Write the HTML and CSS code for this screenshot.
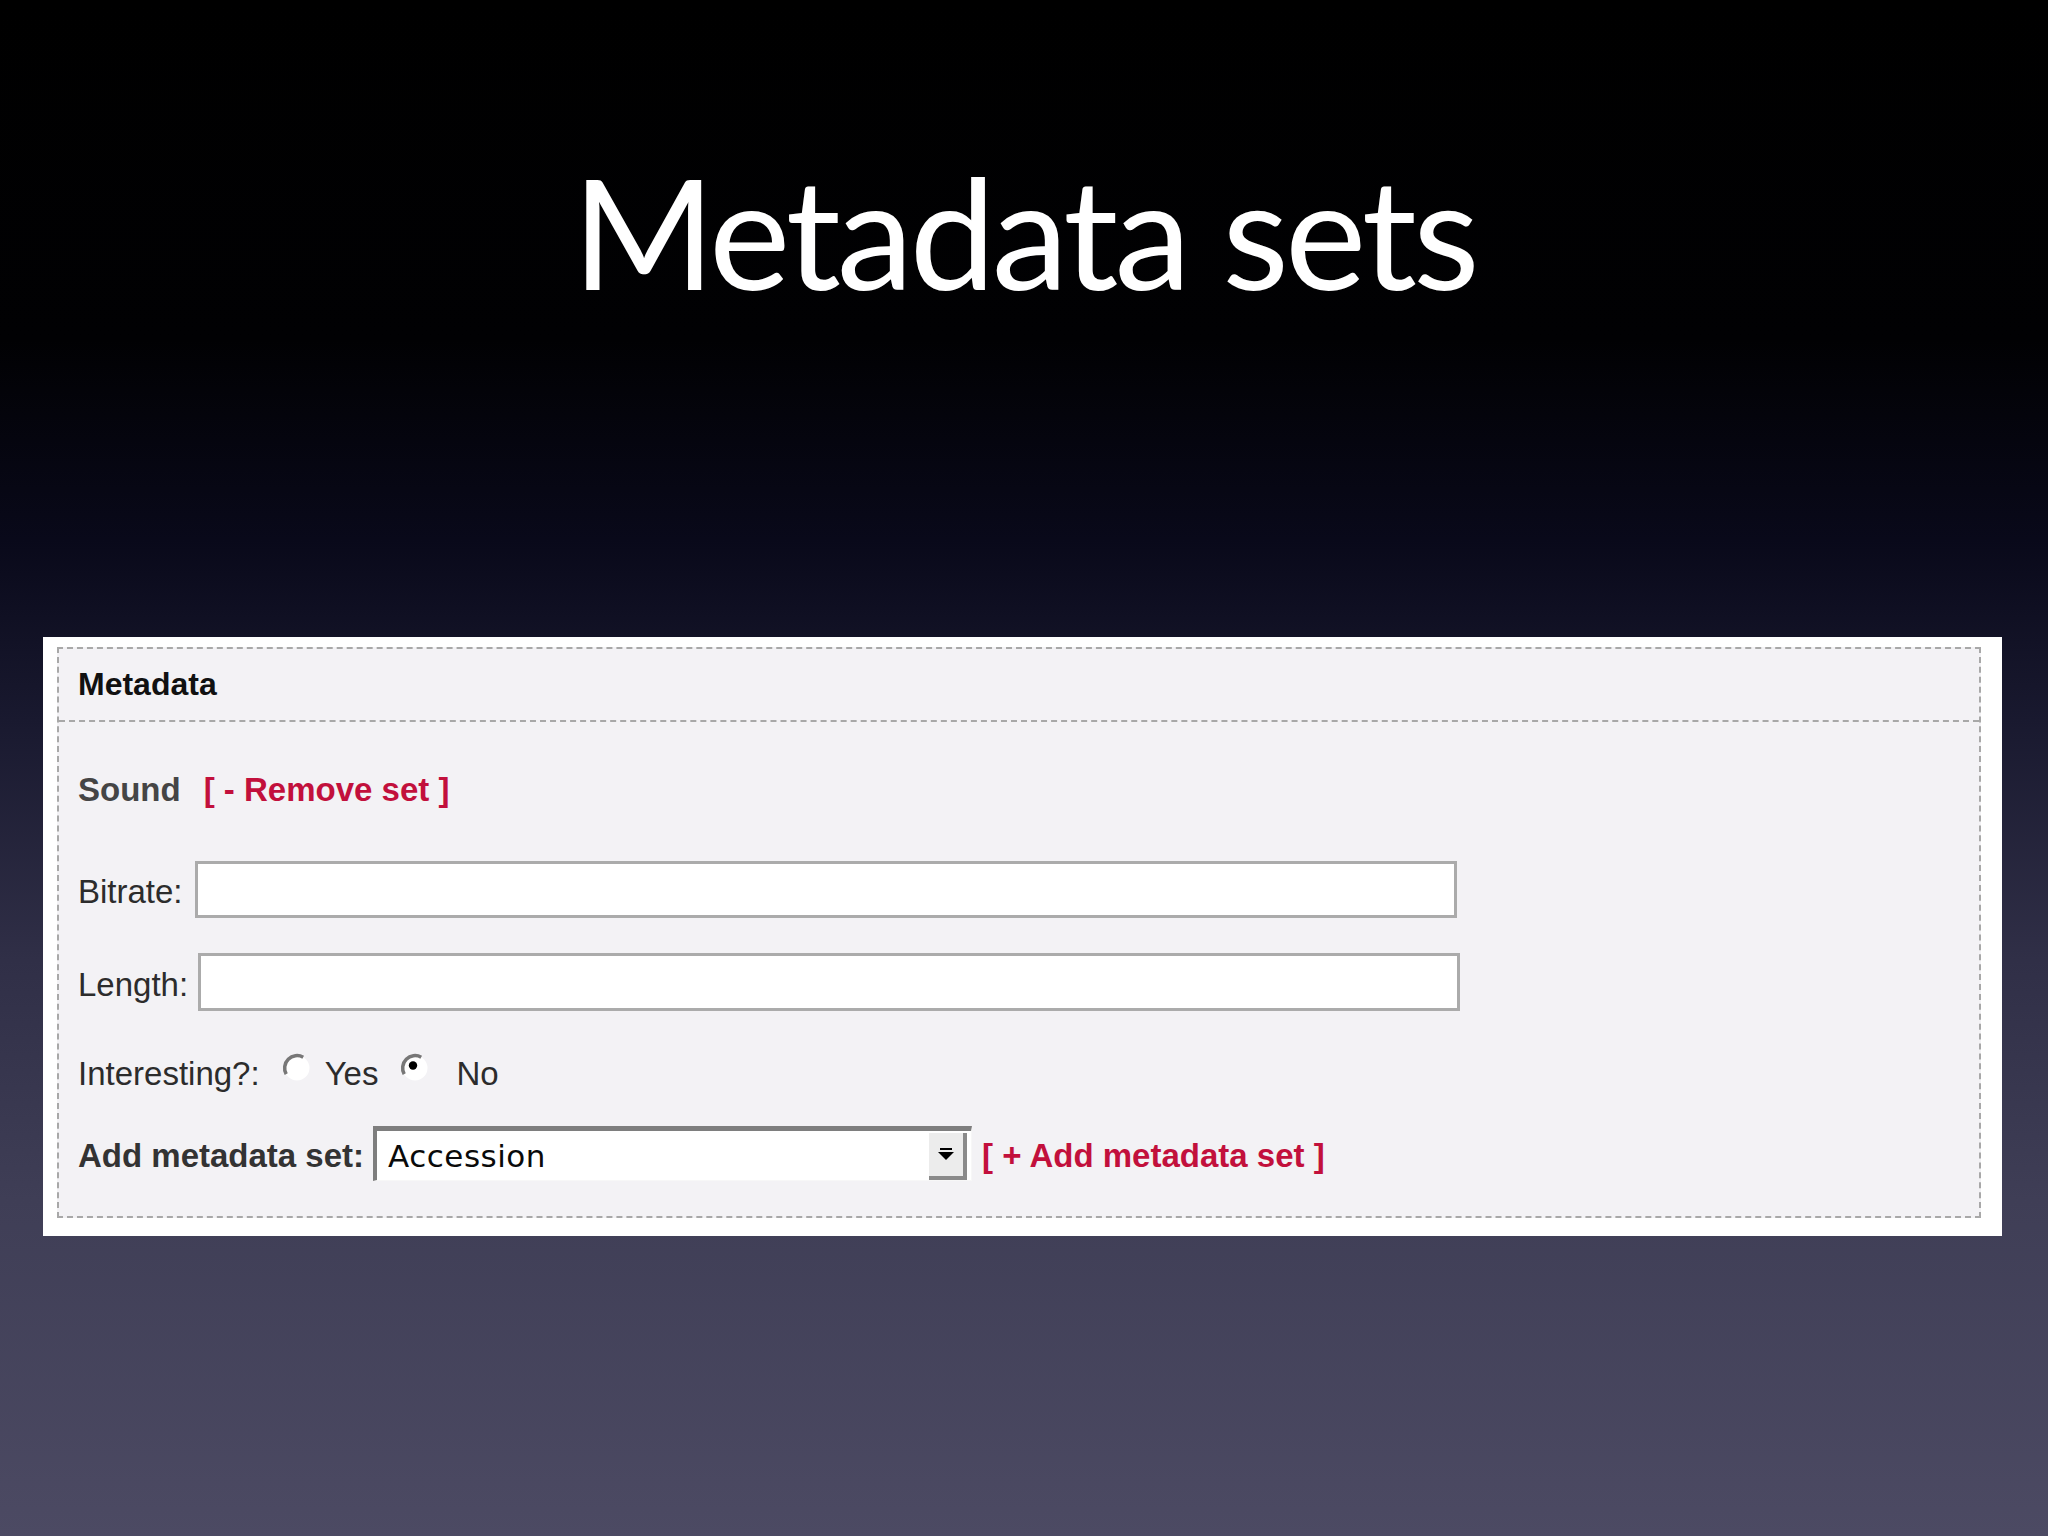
FILE: index.html
```html
<!DOCTYPE html>
<html lang="en">
<head>
<meta charset="utf-8">
<title>Metadata sets</title>
<link rel="stylesheet" href="styles.css">
</head>
<body>
<div class="slide">
  <h1 class="title">Metadata sets</h1>
  <div class="panel">
    <div class="fieldset">
      <div class="legend">Metadata</div>
      <div class="fields">
        <div class="row set-row">
          <span class="set-name">Sound</span>
          <span class="link">[ - Remove set ]</span>
        </div>
        <div class="row input-row bitrate-row">
          <span class="label">Bitrate:</span>
          <span class="text-input"></span>
        </div>
        <div class="row input-row length-row">
          <span class="label">Length:</span>
          <span class="text-input"></span>
        </div>
        <div class="row radio-row">
          <span class="label">Interesting?:</span>
          <span class="radio">
            <svg width="32" height="32" viewBox="0 0 32 32">
              <circle cx="15" cy="16" r="12.5" fill="#ffffff"/>
              <path d="M4.2 22.2 A12.5 12.5 0 0 1 21.2 5.2" fill="none" stroke="#777777" stroke-width="3.5"/>
            </svg>
          </span>
          <span class="radio-label">Yes</span>
          <span class="radio">
            <svg width="32" height="32" viewBox="0 0 32 32">
              <circle cx="15" cy="16" r="12.5" fill="#ffffff"/>
              <path d="M4.2 22.2 A12.5 12.5 0 0 1 21.2 5.2" fill="none" stroke="#777777" stroke-width="3.5"/>
              <circle cx="13" cy="13.5" r="4.2" fill="#000000"/>
            </svg>
          </span>
          <span class="radio-label no">No</span>
        </div>
        <div class="row add-row">
          <span class="label strong">Add metadata set:</span>
          <span class="select">
            <span class="select-value">Accession</span>
            <span class="select-button">
              <svg width="22" height="16" viewBox="0 0 22 16">
                <rect x="5" y="1" width="12" height="2" fill="#000"/>
                <path d="M3 5 H19 L11 13 Z" fill="#000"/>
              </svg>
            </span>
          </span>
          <span class="link">[ + Add metadata set ]</span>
        </div>
      </div>
    </div>
  </div>
</div>
</body>
</html>
```

FILE: styles.css
```css
html, body {
  margin: 0;
  padding: 0;
}

body {
  width: 2048px;
  height: 1536px;
  overflow: hidden;
  background: linear-gradient(180deg,
    #000000 0px,
    #010103 340px,
    #09091a 540px,
    #19192f 720px,
    #302f47 960px,
    #3f3e56 1200px,
    #4c4a63 1536px);
}

.slide {
  display: flex;
  flex-direction: column;
}

.title {
  margin: 0;
  padding-top: 154px;
  height: 154px;
  font-family: Lato, "Open Sans", sans-serif;
  font-weight: 400;
  font-size: 154px;
  line-height: 154px;
  color: #ffffff;
  text-align: center;
  letter-spacing: -4px;
}

.panel {
  margin: 329px 0 0 43px;
  width: 1959px;
  height: 599px;
  box-sizing: border-box;
  background: #ffffff;
  padding: 10px 21px 18px 14px;
  font-family: "Liberation Sans", Arial, sans-serif;
  font-size: 33px;
  color: #2c2c2c;
}

.fieldset {
  height: 100%;
  box-sizing: border-box;
  border: 2px dashed #a8a8a8;
  background: #f3f2f5;
  display: flex;
  flex-direction: column;
}

.legend {
  height: 71px;
  border-bottom: 2px dashed #a8a8a8;
  padding-left: 19px;
  display: flex;
  align-items: center;
  font-weight: 700;
  font-size: 32px;
  color: #111111;
}

.fields {
  padding-left: 19px;
  display: flex;
  flex-direction: column;
}

.row {
  display: flex;
  align-items: center;
}

.set-row {
  margin-top: 48px;
  height: 40px;
  font-weight: 700;
}

.set-name {
  color: #454545;
  margin-right: 23px;
}

.link {
  color: #c2103c;
  font-weight: 700;
  white-space: pre;
}

.input-row .label {
  margin-right: 12px;
  padding-top: 5px;
}

.length-row .label {
  margin-right: 10px;
}

.bitrate-row {
  margin-top: 51px;
  height: 57px;
}

.length-row {
  margin-top: 35px;
  height: 58px;
}

.text-input {
  width: 1262px;
  height: 100%;
  box-sizing: border-box;
  border: 3px solid #ababab;
  background: #ffffff;
}

.radio-row {
  margin-top: 41px;
  height: 40px;
  position: relative;
  top: 2px;
}

.radio {
  display: flex;
  width: 32px;
  height: 32px;
  margin-left: 22px;
  margin-right: 11px;
  position: relative;
  top: -6px;
}

.radio-label.no {
  margin-left: 13px;
}

.add-row {
  margin-top: 34px;
  height: 55px;
  font-weight: 700;
}

.add-row .label,
.add-row .link {
  padding-top: 4px;
}

.label.strong {
  color: #333333;
  margin-right: 9px;
}

.select {
  width: 599px;
  height: 55px;
  box-sizing: border-box;
  border-top: 5px solid #7e7e7e;
  border-left: 4px solid #7e7e7e;
  border-right: 1px solid #f7f7f7;
  border-bottom: 1px solid #f7f7f7;
  background: #ffffff;
  display: flex;
  align-items: stretch;
  margin-right: 10px;
}

.select-value {
  flex: 1;
  display: flex;
  align-items: center;
  padding-left: 11px;
  font-family: "DejaVu Sans", Verdana, sans-serif;
  font-weight: 400;
  font-size: 31px;
  letter-spacing: 0.5px;
  color: #0a0a0a;
}

.select-button {
  width: 38px;
  box-sizing: border-box;
  margin: 2px 4px 0 0;
  background: #ececec;
  border-right: 4px solid #8a8a8a;
  border-bottom: 4px solid #8a8a8a;
  display: flex;
  align-items: center;
  justify-content: center;
}
```
